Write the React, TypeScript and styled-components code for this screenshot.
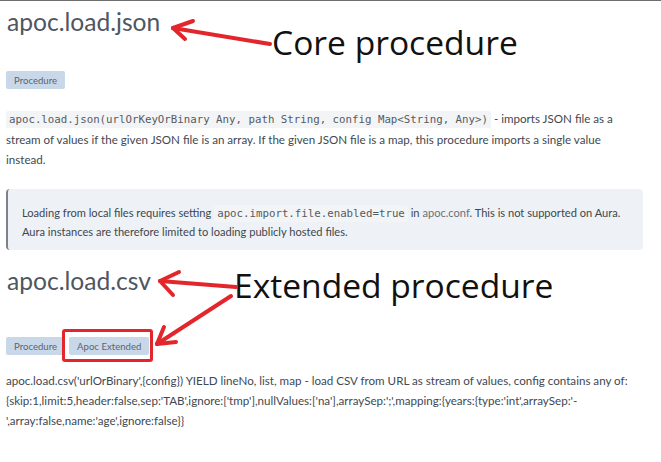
import React from "react";
import styled, { createGlobalStyle } from "styled-components";

const Global = createGlobalStyle`
  html, body { margin: 0; padding: 0; background: #ffffff; }
  body { font-family: Lato, "Noto Sans", sans-serif; }
`;

const Page = styled.div`
  position: relative;
  width: 661px;
  height: 462px;
  overflow: hidden;
  border-top: 1px solid #6e6e6e;
  box-sizing: border-box;
  padding: 0 18px 0 6px;
  display: flex;
  flex-direction: column;
`;

const Title = styled.h2<{ $mt: number }>`
  margin: ${(p) => p.$mt}px 0 0 1px;
  font-family: Lato, "Noto Sans", sans-serif;
  font-weight: 400;
  font-size: 24.6px;
  line-height: 30px;
  color: #4f565f;
`;

const Badges = styled.div<{ $mt: number }>`
  display: flex;
  gap: 4px;
  margin-top: ${(p) => p.$mt}px;
`;

const Badge = styled.span`
  display: inline-flex;
  align-items: center;
  height: 18px;
  padding: 0 8px;
  border-radius: 2px;
  background: #c9d8e8;
  color: #5d6470;
  font-size: 9.6px;
  font-family: Lato, "Noto Sans", sans-serif;
`;

const Para = styled.p<{ $mt: number }>`
  margin: ${(p) => p.$mt}px 0 0 0;
  font-size: 11.6px;
  line-height: 20px;
  color: #414851;
`;

const Code = styled.code`
  font-family: "DejaVu Sans Mono", "Liberation Mono", monospace;
  font-size: 10.75px;
  background: #f3f4f6;
  color: #555b63;
  padding: 2px 3px;
  border-radius: 2px;
`;

const Note = styled.div`
  margin-top: 19px;
  background: #eef2f6;
  border-left: 2px solid #7d8288;
  border-radius: 4px;
  padding: 15px 14px 9px 14px;
  font-size: 11.1px;
  line-height: 18px;
  color: #40464e;
`;

const Muted = styled.span`
  color: #6a717a;
`;

const Overlay = styled.svg`
  position: absolute;
  left: 0;
  top: 0;
  pointer-events: none;
`;

const Callout = styled.div<{ $x: number; $y: number }>`
  position: absolute;
  left: ${(p) => p.$x}px;
  top: ${(p) => p.$y}px;
  font-family: "Open Sans", "Noto Sans", sans-serif;
  font-size: 33.6px;
  line-height: 40px;
  color: #111111;
  white-space: nowrap;
`;

const Highlight = styled.div`
  position: absolute;
  left: 62px;
  top: 328px;
  width: 91px;
  height: 33px;
  box-sizing: border-box;
  border: 3px solid #e3262b;
  border-radius: 3px;
`;

export default function App() {
  return (
    <>
      <Global />
      <Page>
        <Title $mt={6}>apoc.load.json</Title>
        <Badges $mt={34}>
          <Badge>Procedure</Badge>
        </Badges>
        <Para $mt={20}>
          <Code>apoc.load.json(urlOrKeyOrBinary Any, path String, config Map&lt;String, Any&gt;)</Code> - imports JSON file as a
          stream of values if the given JSON file is an array. If the given JSON file is a map, this procedure imports a single value
          instead.
        </Para>
        <Note>
          Loading from local files requires setting <Code>apoc.import.file.enabled=true</Code> in <Muted>apoc.conf</Muted>. This is not supported on Aura.
          <br />
          Aura instances are therefore limited to loading publicly hosted files.
        </Note>
        <Title $mt={16}>apoc.load.csv</Title>
        <Badges $mt={41}>
          <Badge>Procedure</Badge>
          <Badge>Apoc Extended</Badge>
        </Badges>
        <Para $mt={16}>
          apoc.load.csv('urlOrBinary',{"{config}"}) YIELD lineNo, list, map - load CSV from URL as stream of values, config contains any of:
          {"{skip:1,limit:5,header:false,sep:'TAB',ignore:['tmp'],nullValues:['na'],arraySep:';',mapping:{years:{type:'int',arraySep:'-"}
          {"',array:false,name:'age',ignore:false}}"}
        </Para>
        <Highlight />
        <Callout $x={272} $y={21}>Core procedure</Callout>
        <Callout $x={234} $y={264}>Extended procedure</Callout>
        <Overlay width="661" height="462" viewBox="0 0 661 462">
          <g stroke="#e3262b" strokeWidth="4" strokeLinecap="round" fill="none">
            <line x1="270" y1="43" x2="173" y2="27" />
            <line x1="173" y1="27" x2="193" y2="20" />
            <line x1="173" y1="27" x2="185" y2="38" />
            <line x1="236" y1="286" x2="160" y2="280" />
            <line x1="160" y1="280" x2="179" y2="271" />
            <line x1="160" y1="280" x2="173" y2="294" />
            <line x1="231" y1="295" x2="157" y2="343" />
            <line x1="157" y1="343" x2="164" y2="326" />
            <line x1="157" y1="343" x2="176" y2="341" />
          </g>
        </Overlay>
      </Page>
    </>
  );
}
